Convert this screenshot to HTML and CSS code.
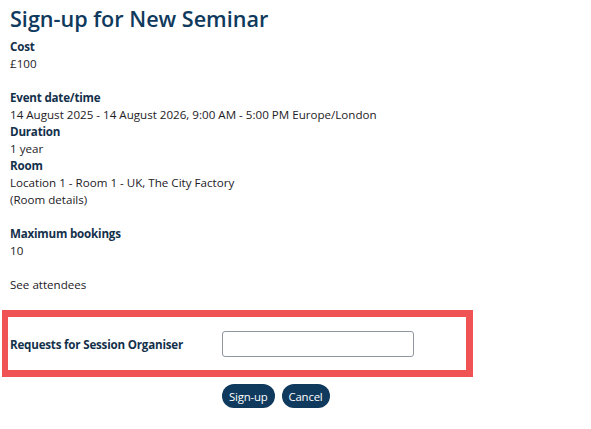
FILE: index.html
```html
<!DOCTYPE html>
<html lang="en">
<head>
<meta charset="utf-8">
<title>Sign-up for New Seminar</title>
<link rel="stylesheet" href="styles.css">
</head>
<body>
<main class="page">
  <h1 class="title">Sign-up for New Seminar</h1>
  <dl class="details">
    <dt>Cost</dt>
    <dd>£100</dd>
    <dd class="spacer"></dd>
    <dt>Event date/time</dt>
    <dd>14 August 2025 - 14 August 2026, 9:00 AM - 5:00 PM Europe/London</dd>
    <dt>Duration</dt>
    <dd>1 year</dd>
    <dt>Room</dt>
    <dd>Location 1 - Room 1 - UK, The City Factory</dd>
    <dd>(Room details)</dd>
    <dd class="spacer"></dd>
    <dt>Maximum bookings</dt>
    <dd>10</dd>
    <dd class="spacer"></dd>
    <dd>See attendees</dd>
  </dl>
  <form class="signup">
    <div class="highlight">
      <label class="field-label" for="req">Requests for Session Organiser</label>
      <input class="field-input" id="req" type="text">
    </div>
    <div class="actions">
      <button type="button" class="btn">Sign-up</button>
      <button type="button" class="btn">Cancel</button>
    </div>
  </form>
</main>
</body>
</html>
```

FILE: styles.css
```css
html, body {
  margin: 0;
  padding: 0;
  background: #ffffff;
}
body {
  font-family: "Open Sans", "Noto Sans", sans-serif;
  font-size: 11.6px;
  color: #1d2125;
}
.page {
  padding: 4px 0 0 0;
}
.title {
  margin: 0 0 0 10px;
  font-size: 21.6px;
  line-height: 30px;
  font-weight: 600;
  color: #0f3a5d;
}
.details {
  margin: 4px 0 0 10px;
  line-height: 17px;
}
.details dt {
  font-weight: 700;
  color: #13304b;
  letter-spacing: -0.2px;
}
.details dd {
  margin: 0;
}
.details .spacer {
  height: 17px;
}
.signup {
  margin-top: 17px;
}
.highlight {
  margin-left: 2px;
  width: 456px;
  height: 53px;
  border: 7px solid #ef5353;
  border-left-width: 6px;
  padding-left: 2px;
  display: flex;
  align-items: center;
}
.field-label {
  width: 212px;
  font-weight: 700;
  color: #13304b;
  letter-spacing: -0.2px;
  padding-top: 2px;
}
.field-input {
  box-sizing: border-box;
  width: 192px;
  height: 26px;
  margin: 0;
  border: 1px solid #8f959e;
  border-radius: 3px;
  background: #fff;
  padding: 2px 6px;
}
.actions {
  display: flex;
  gap: 7px;
  margin: 7px 0 0 222px;
}
.btn {
  height: 24px;
  padding: 0 7px;
  border: none;
  border-radius: 12px;
  background: #0f3a5d;
  color: #ffffff;
  font-family: inherit;
  font-size: 11.4px;
  letter-spacing: -0.2px;
  cursor: pointer;
}
```
